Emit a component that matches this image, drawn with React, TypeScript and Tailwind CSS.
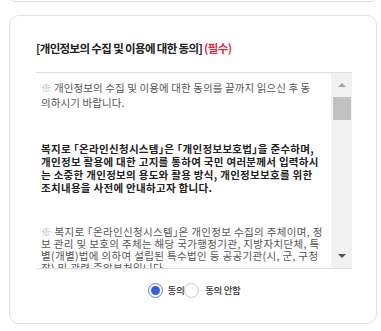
import React from "react";

export default function App() {
  return (
    <div
      className="w-[381px] h-[331px] bg-white overflow-hidden"
      style={{ fontFamily: '"Noto Sans CJK KR", "Noto Sans", sans-serif' }}
    >
      {/* previous card bottom edge */}
      <div className="ml-[9px] mr-[4px] h-[12px] -mt-[10px] border border-[#dedede] rounded-[10px]" />

      <div className="mt-[13px] ml-[9px] mr-[4px] h-[309px] border border-[#e0e0e0] rounded-[10px] flex flex-col pl-[26px] pr-[24px]">
        <div className="pt-[24px] text-[11.5px] leading-[16px] font-bold text-[#222] tracking-[-0.65px] whitespace-nowrap">
          [개인정보의 수집 및 이용에 대한 동의] <span className="text-[#e5283f]">(필수)</span>
        </div>

        <div className="mt-[16px] h-[197px] border-t border-b border-[#dddddd] flex">
          <div className="flex-1 overflow-hidden pl-[5px] pt-[7px] text-[10.5px] whitespace-nowrap [font-feature-settings:'halt']">
            <p className="leading-[15px] text-[#555] tracking-[0.1px]">
              <span className="text-[#aaa]">※</span> 개인정보의 수집 및 이용에 대한 동의를 끝까지 읽으신 후 동
              <br />
              의하시기 바랍니다.
            </p>
            <p className="mt-[32px] leading-[13px] font-bold text-[#222] tracking-[0.3px]">
              복지로 「온라인신청시스템」은 「개인정보보호법」을 준수하며,
              <br />
              개인정보 활용에 대한 고지를 통하여 국민 여러분께서 입력하시
              <br />
              는 소중한 개인정보의 용도와 활용 방식, 개인정보보호를 위한
              <br />
              조치내용을 사전에 안내하고자 합니다.
            </p>
            <p className="mt-[32px] leading-[12px] text-[#555] tracking-[0.35px]">
              <span className="text-[#aaa]">※</span> 복지로 「온라인신청시스템」은 개인정보 수집의 주체이며, 정
              <br />
              보 관리 및 보호의 주체는 해당 국가행정기관, 지방자치단체, 특
              <br />
              별(개별)법에 의하여 설립된 특수법인 등 공공기관(시, 군, 구청
              <br />
              장) 및 관련 중앙부처입니다.
            </p>
          </div>

          {/* scrollbar */}
          <div className="w-[21px] shrink-0 bg-[#f1f1f1] flex flex-col items-center">
            <div className="h-[24px] flex items-center justify-center">
              <div className="w-0 h-0 border-l-[4.5px] border-r-[4.5px] border-b-[4.5px] border-l-transparent border-r-transparent border-b-[#a3a3a3]" />
            </div>
            <div className="w-[18px] h-[23px] bg-[#c1c1c1]" />
            <div className="flex-1" />
            <div className="h-[24px] flex items-center justify-center">
              <div className="w-0 h-0 border-l-[4.5px] border-r-[4.5px] border-t-[4.5px] border-l-transparent border-r-transparent border-t-[#505050]" />
            </div>
          </div>
        </div>

        <div className="mt-[14px] flex items-center justify-center text-[9.5px] leading-[15px] font-medium text-[#333] tracking-[-0.4px]">
          <div className="w-[15px] h-[15px] rounded-full border-[1.5px] border-[#5b7be8] flex items-center justify-center">
            <div className="w-[9px] h-[9px] rounded-full bg-[#3b5bdb]" />
          </div>
          <span className="ml-[5px]">동의</span>
          <div className="w-[15px] h-[15px] rounded-full border border-[#c8c8c8] bg-white" />
          <span className="ml-[6px]">동의 안함</span>
        </div>
      </div>
    </div>
  );
}
